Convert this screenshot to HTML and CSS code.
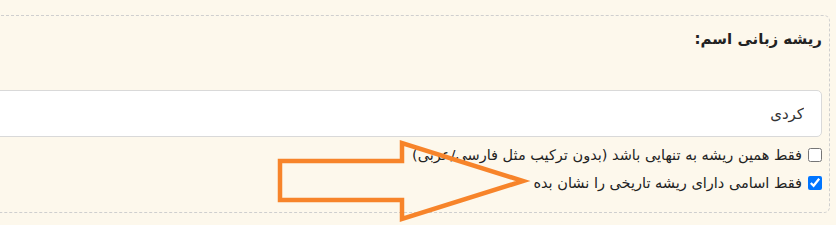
FILE: index.html
```html
<!DOCTYPE html>
<html lang="fa" dir="rtl">
<head>
    <meta charset="UTF-8">
    <meta name="viewport" content="width=device-width, initial-scale=1.0">
    <title>ریشه زبانی</title>
    <link rel="stylesheet" href="styles.css">
</head>
<body>

    <div class="page">
        <div class="panel">
            <h3 class="title">ریشه زبانی اسم:</h3>
            <input type="text" class="field" value="کردی">
            <label class="check">
                <input type="checkbox">
                <span>فقط همین ریشه به تنهایی باشد (بدون ترکیب مثل فارسی/عربی)</span>
            </label>
            <label class="check">
                <input type="checkbox" checked>
                <span>فقط اسامی دارای ریشه تاریخی را نشان بده</span>
            </label>
        </div>

        <!-- annotation arrow -->
        <svg class="arrow" width="836" height="225" viewBox="0 0 836 225">
            <polygon points="280,161 402,161 402,143 523,181 402,219 402,200 280,200"
                     fill="none" stroke="#f7842a" stroke-width="4.5" stroke-linejoin="miter"/>
        </svg>
    </div>

</body>
</html>
```

FILE: styles.css
```css
body {
    margin: 0;
    background-color: #fdf8ec;
    font-family: "DejaVu Sans", sans-serif;
    color: #222;
}
.page {
    position: relative;
    height: 225px;
    overflow: hidden;
    padding-top: 15px;
    box-sizing: border-box;
}
.panel {
    margin-right: 6px;
    margin-left: -40px;
    height: 198px;
    box-sizing: border-box;
    border: 1px dashed #cfcfcf;
    border-radius: 6px;
    padding: 14px 7px 0 0;
}
.title {
    margin: 0;
    font-size: 15px;
    font-weight: bold;
    line-height: 18px;
}
.field {
    display: block;
    width: 100%;
    box-sizing: border-box;
    margin-top: 42px;
    height: 47px;
    padding: 0 17px;
    border: 1px solid #d9d9d9;
    border-radius: 5px;
    background-color: #fff;
    font-family: "DejaVu Sans", sans-serif;
    font-size: 15px;
    color: #333;
}
.check {
    display: flex;
    align-items: center;
    gap: 6px;
    font-size: 14.5px;
    height: 28px;
}
.check:first-of-type {
    margin-top: 4px;
}
.check input {
    margin: 0;
    width: 14px;
    height: 14px;
}
.arrow {
    position: absolute;
    left: 0;
    top: 0;
    pointer-events: none;
}
```
